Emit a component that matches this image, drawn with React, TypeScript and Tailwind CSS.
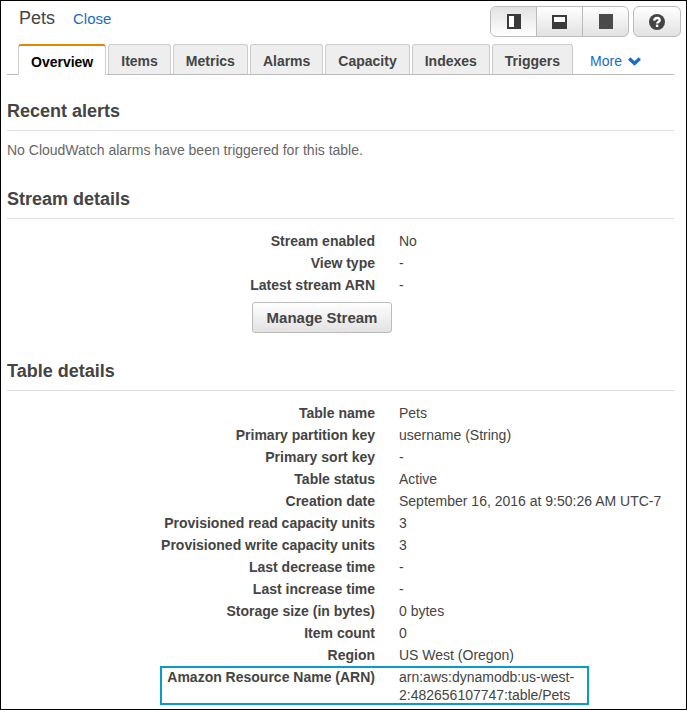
import React from "react";

type Row = { label: string; value: string; highlight?: boolean };

const streamRows: Row[] = [
  { label: "Stream enabled", value: "No" },
  { label: "View type", value: "-" },
  { label: "Latest stream ARN", value: "-" },
];

const tableRows: Row[] = [
  { label: "Table name", value: "Pets" },
  { label: "Primary partition key", value: "username (String)" },
  { label: "Primary sort key", value: "-" },
  { label: "Table status", value: "Active" },
  { label: "Creation date", value: "September 16, 2016 at 9:50:26 AM UTC-7" },
  { label: "Provisioned read capacity units", value: "3" },
  { label: "Provisioned write capacity units", value: "3" },
  { label: "Last decrease time", value: "-" },
  { label: "Last increase time", value: "-" },
  { label: "Storage size (in bytes)", value: "0 bytes" },
  { label: "Item count", value: "0" },
  { label: "Region", value: "US West (Oregon)" },
  {
    label: "Amazon Resource Name (ARN)",
    value: "arn:aws:dynamodb:us-west-2:482656107747:table/Pets",
    highlight: true,
  },
];

const tabs = ["Items", "Metrics", "Alarms", "Capacity", "Indexes", "Triggers"];

function DetailRows({ rows }: { rows: Row[] }) {
  return (
    <dl className="flex flex-col gap-1 pt-[13px] leading-[18px]">
      {rows.map((row) => (
        <div key={row.label} className="relative grid grid-cols-[368fr_275fr] gap-6">
          <dt className="text-right font-bold">{row.label}</dt>
          <dd className={row.highlight ? "max-w-[186px]" : "whitespace-nowrap"}>{row.value}</dd>
          {row.highlight && (
            <span className="pointer-events-none absolute -top-0.5 right-[85px] -bottom-px left-[153px] border-2 border-[#0a9bcd]" />
          )}
        </div>
      ))}
    </dl>
  );
}

function Section({ title, children }: { title: string; children: React.ReactNode }) {
  return (
    <section>
      <h2 className="border-b border-[#ddd] pb-[7px] text-lg leading-6 font-bold">{title}</h2>
      {children}
    </section>
  );
}

function PaneLeftIcon() {
  return (
    <svg width="16" height="16" viewBox="0 0 16 16" aria-hidden="true">
      <rect x="1" y="0" width="14" height="15" fill="#3a3a3a" />
      <rect x="3" y="2" width="5" height="11" fill="#fff" />
    </svg>
  );
}

function PaneTopIcon() {
  return (
    <svg width="16" height="16" viewBox="0 0 16 16" aria-hidden="true">
      <rect x="0" y="1" width="15" height="14" fill="#3a3a3a" />
      <rect x="2" y="3" width="11" height="5" fill="#fff" />
    </svg>
  );
}

function PaneFullIcon() {
  return (
    <svg width="16" height="16" viewBox="0 0 16 16" aria-hidden="true">
      <rect x="1" y="0" width="14" height="15" fill="#4a4a4a" />
    </svg>
  );
}

function HelpIcon() {
  return (
    <svg width="16" height="16" viewBox="0 0 16 16" aria-hidden="true">
      <circle cx="8" cy="8" r="8" fill="#444" />
      <path
        d="M5.2 6.6C5.4 4.9 6.5 4 8 4s2.7.9 2.7 2.2c0 1.7-2.6 1.7-2.6 3.3"
        fill="none"
        stroke="#fff"
        strokeWidth="2.3"
      />
      <rect x="6.9" y="10.6" width="2.4" height="2.4" fill="#fff" />
    </svg>
  );
}

export default function App() {
  return (
    <main className="border border-black bg-white pb-[5px] font-['Liberation_Sans',Arial,sans-serif] text-sm text-[#444]">
      <header className="flex justify-between pt-[5px] pr-[5px] pl-[18px]">
        <div className="flex items-baseline gap-[18px]">
          <h1 className="text-lg leading-6">Pets</h1>
          <a href="#close" className="text-[15px] leading-6 text-[#146ec3]">
            Close
          </a>
        </div>
        <div className="flex gap-1">
          <div className="flex h-[31px] divide-x divide-[#bbb] overflow-hidden rounded-md border border-[#bbb] bg-linear-to-b from-white to-[#e2e2e2]">
            <button
              aria-label="Split left"
              className="flex w-[46px] items-center justify-center bg-linear-to-b from-[#e2e2e2] to-white"
            >
              <PaneLeftIcon />
            </button>
            <button aria-label="Split top" className="flex w-[46px] items-center justify-center">
              <PaneTopIcon />
            </button>
            <button aria-label="Full pane" className="flex w-[45px] items-center justify-center">
              <PaneFullIcon />
            </button>
          </div>
          <button
            aria-label="Help"
            className="flex h-[31px] w-12 items-center justify-center rounded-md border border-[#bbb] bg-linear-to-b from-white to-[#e2e2e2]"
          >
            <HelpIcon />
          </button>
        </div>
      </header>

      <div className="pr-3 pl-1.5">
        <nav className="mt-[7px] flex items-end gap-0.5 border-b border-[#bbb] pl-[11px] leading-[18px]">
          <button className="-mb-px h-[31px] rounded-t-[3px] border-x border-t-2 border-x-[#ccc] border-t-[#e48700] bg-white px-3 pt-0.5 font-bold text-black">
            Overview
          </button>
          {tabs.map((tab) => (
            <button
              key={tab}
              className="h-[30px] rounded-t-[3px] border border-b-0 border-[#ccc] bg-[#eee] px-3 pt-1 pb-0.5 font-bold"
            >
              {tab}
            </button>
          ))}
          <button className="ml-[15px] flex h-[30px] items-center gap-1.5 pt-1 text-[#146ec3]">
            More
            <svg width="13" height="9" viewBox="0 0 13 9" aria-hidden="true">
              <path d="M1.2 1.6 6.5 6.4 11.8 1.6" fill="none" stroke="#146ec3" strokeWidth="3.4" />
            </svg>
          </button>
        </nav>

        <div className="flex flex-col gap-[26px] pt-6">
          <Section title="Recent alerts">
            <p className="pt-2 leading-[22px] text-[#666]">
              No CloudWatch alarms have been triggered for this table.
            </p>
          </Section>

          <Section title="Stream details">
            <DetailRows rows={streamRows} />
            <div className="mt-2 flex justify-center pr-[37px]">
              <button className="h-[31px] rounded-[3px] border border-[#bbb] bg-linear-to-b from-white to-[#e2e2e2] px-3.5 text-[15px] font-bold">
                Manage Stream
              </button>
            </div>
          </Section>

          <Section title="Table details">
            <DetailRows rows={tableRows} />
          </Section>
        </div>
      </div>
    </main>
  );
}
